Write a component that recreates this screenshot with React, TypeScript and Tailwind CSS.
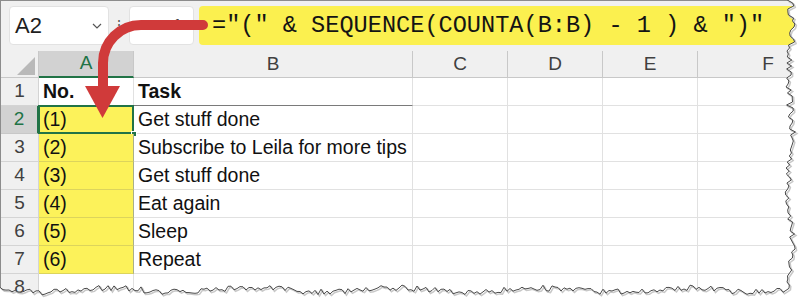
import React from "react";

const GREEN = "#217346";
const YELLOW = "#fcf25a";
const COLS = ["A", "B", "C", "D", "E", "F"];
const WIDTHS = ["w-[95px]", "w-[279px]", "w-[95px]", "w-[95px]", "w-[95px]", "w-[141px]"];

const ROWS = [
  { n: 1, a: "No.", b: "Task" },
  { n: 2, a: "(1)", b: "Get stuff done" },
  { n: 3, a: "(2)", b: "Subscribe to Leila for more tips" },
  { n: 4, a: "(3)", b: "Get stuff done" },
  { n: 5, a: "(4)", b: "Eat again" },
  { n: 6, a: "(5)", b: "Sleep" },
  { n: 7, a: "(6)", b: "Repeat" },
  { n: 8, a: "", b: "" },
];

/** Deterministic jagged "torn paper" edge along the right and bottom sides. */
function tornEdge() {
  let s = 12345;
  const r = () => {
    s = (s * 16807) % 2147483647;
    return s / 2147483647;
  };
  const pts: [number, number][] = [];
  for (let y = 0; y <= 286; y += 3) {
    pts.push([790 + Math.sin(y / 17) * 2 + (r() - 0.5) * 7, y]);
  }
  for (let x = 789; x >= 0; x -= 3) {
    pts.push([x, 290 + Math.sin(x / 23) * 2 + (r() - 0.5) * 6]);
  }
  return pts;
}

function TornOverlay() {
  const pts = tornEdge();
  const line = pts.map(([x, y]) => `${x.toFixed(1)},${y.toFixed(1)}`).join(" ");
  const shadow = pts.map(([x, y]) => `${(x + 1.5).toFixed(1)},${(y + 1.5).toFixed(1)}`).join(" ");
  return (
    <svg className="pointer-events-none absolute inset-0" width={800} height={299}>
      <path d={`M800,0 L${line} L0,299 L800,299 Z`} fill="#ffffff" />
      <polyline points={shadow} fill="none" stroke="#c8c8c8" strokeWidth={1.5} />
      <polyline points={line} fill="none" stroke="#4a4a4a" strokeWidth={1} />
    </svg>
  );
}

function Arrow() {
  return (
    <svg className="pointer-events-none absolute left-0 top-0" width={240} height={130}>
      <path
        d="M203 25 L141 25 A38 38 0 0 0 103 63 L103 90"
        fill="none"
        stroke="#d03a3a"
        strokeWidth={10}
        strokeLinecap="round"
      />
      <polygon points="85,86 120,86 102.5,118" fill="#d03a3a" />
    </svg>
  );
}

function TopBar() {
  return (
    <div className="flex h-[50px] items-start gap-0 bg-[#f0f0f0] pt-[5px] pl-[8px]">
      <div className="flex h-[39px] w-[100px] items-center justify-between rounded-[4px] border border-[#e2e2e2] bg-white pl-[5px] pr-[6px]">
        <span className="text-[22px] text-[#1e1e1e]">A2</span>
        <svg width="10" height="6" viewBox="0 0 10 6">
          <path d="M1 1 L5 5 L9 1" fill="none" stroke="#555" strokeWidth={1.2} />
        </svg>
      </div>
      <div className="flex h-[39px] w-[20px] items-center justify-center text-[14px] text-[#555]">⋮</div>
      <div className="flex h-[39px] w-[65px] items-center justify-end rounded-[4px] border border-[#e2e2e2] bg-white pr-[8px] text-[15px] italic text-[#444]">
        fx
      </div>
      <div
        className="ml-[5px] flex h-[39px] flex-1 items-center rounded-l-[4px] bg-[#fbf04f] pl-[13px] text-[23.6px] text-[#141414]"
        style={{ fontFamily: '"Liberation Mono", monospace' }}
      >
        <span className="whitespace-pre">="(" &amp; SEQUENCE(COUNTA(B:B) - 1 ) &amp; ")"</span>
      </div>
    </div>
  );
}

function HeaderRow() {
  return (
    <div className="flex h-[27px]">
      <div className="flex w-[38px] shrink-0 items-end justify-end border-r border-b border-[#c8c8c8] bg-[#f0f0f0] pr-[3px] pb-[2px]">
        <svg width="18" height="18">
          <polygon points="0,18 18,18 18,0" fill="#b9b9b9" />
        </svg>
      </div>
      {COLS.map((c, i) => (
        <div
          key={c}
          className={`${WIDTHS[i]} flex shrink-0 items-center justify-center border-r text-[19px] ${
            i === 0
              ? "border-b-2 border-r-[#c8c8c8] border-b-[#217346] bg-[#d2d2d2] text-[#217346]"
              : "border-b border-[#c8c8c8] bg-[#f0f0f0] text-[#404040]"
          }`}
        >
          {c}
        </div>
      ))}
    </div>
  );
}

function Row({ n, a, b }: { n: number; a: string; b: string }) {
  const yellow = n >= 2 && n <= 7;
  const bold = n === 1;
  const sel = n === 2;
  return (
    <div className="flex h-[28px]">
      <div
        className={`flex w-[38px] shrink-0 items-center justify-center border-b text-[19px] ${
          sel
            ? "border-r-2 border-r-[#217346] border-b-[#c8c8c8] bg-[#d2d2d2] text-[#217346]"
            : "border-r border-[#d4d4d4] bg-[#f0f0f0] text-[#404040]"
        }`}
      >
        {n}
      </div>
      <div
        className={`relative flex w-[95px] shrink-0 items-center border-r pl-[4px] pt-[1px] ${
          yellow ? "border-b border-[#dcd45c] border-r-[#a9b08a]" : "border-b border-[#e1e1e1]"
        } ${bold ? "border-b-[#7a7a7a] font-bold" : ""}`}
        style={yellow ? { backgroundColor: YELLOW } : undefined}
      >
        {a}
        {sel && (
          <>
            <div className="absolute -top-[1px] -left-[1px] -right-[1px] -bottom-[1px] border-2 border-[#217346]" />
            <div className="absolute -right-[4px] -bottom-[4px] h-[6px] w-[6px] border border-white bg-[#217346]" />
          </>
        )}
      </div>
      <div
        className={`flex w-[279px] shrink-0 items-center border-r border-b pl-[4px] pt-[1px] ${
          bold ? "border-r-[#e1e1e1] border-b-[#7a7a7a] font-bold" : "border-[#e1e1e1]"
        }`}
      >
        {b}
      </div>
      {[2, 3, 4, 5].map((i) => (
        <div key={i} className={`${WIDTHS[i]} shrink-0 border-r border-b border-[#e1e1e1]`} />
      ))}
    </div>
  );
}

export default function App() {
  return (
    <div
      className="relative h-[299px] w-[800px] overflow-hidden bg-white text-[19.5px] text-[#111]"
      style={{ fontFamily: '"Liberation Sans", Arial, sans-serif' }}
    >
      <div className="h-full border-t border-l border-[#8c8c8c]">
        <TopBar />
        <HeaderRow />
        {ROWS.map((r) => (
          <Row key={r.n} {...r} />
        ))}
      </div>
      <Arrow />
      <TornOverlay />
    </div>
  );
}
